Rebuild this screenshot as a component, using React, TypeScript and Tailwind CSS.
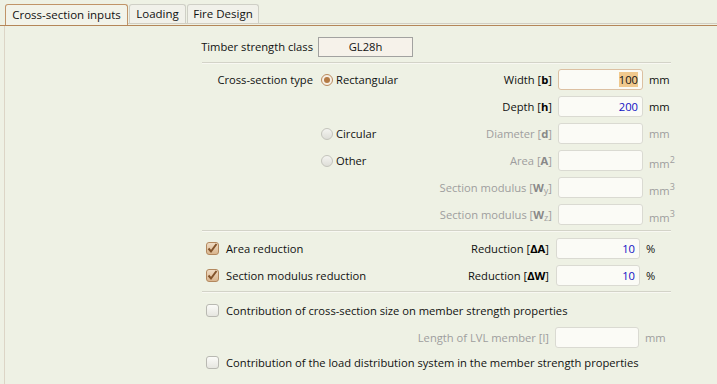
const Radio = ({ checked }: { checked?: boolean }) => (
  <span
    className={`inline-flex items-center justify-center w-[12px] h-[12px] rounded-full border ${
      checked ? "border-[#b88a5e] bg-[#f7efe4]" : "border-[#c4c4bc] bg-gradient-to-b from-[#f4f4f0] to-[#dedeD8]"
    }`}
  >
    {checked && <span className="w-[6px] h-[6px] rounded-full bg-[#b47a44]" />}
  </span>
);

const Check = ({ checked }: { checked?: boolean }) =>
  checked ? (
    <span className="inline-flex items-center justify-center w-[13px] h-[13px] rounded-[3px] border border-[#b3885e] bg-gradient-to-b from-[#efdcc4] to-[#d9b58e]">
      <svg width="11" height="11" viewBox="0 0 11 11">
        <path d="M1.5 5.5 L4 8.5 L9.5 1" fill="none" stroke="#82532a" strokeWidth="2" />
      </svg>
    </span>
  ) : (
    <span className="inline-block w-[13px] h-[13px] rounded-[3px] border border-[#b9b9b2] bg-gradient-to-b from-[#fbfbf8] to-[#e6e6e0]" />
  );

const Field = ({ value, kind, w = "w-[85px]" }: { value?: string; kind?: "focus" | "blue"; w?: string }) => (
  <div
    className={`${w} h-[21px] rounded-[3px] border bg-[#fbfbf6] flex items-center justify-end pr-[4px] ${
      kind === "focus" ? "border-[#dcc0a2]" : "border-[#dadad2]"
    }`}
  >
    {value && kind === "focus" && <span className="bg-[#f0c98e] text-[#111] leading-[15px]">{value}</span>}
    {value && kind === "blue" && <span className="text-[#1010c4]">{value}</span>}
  </div>
);

const Sep = () => <div className="ml-[197px] w-[469px] h-px bg-[#d3d3c8] border-b border-[#f8f8f2] box-content" />;

const Lbl = ({ pre, b, sub, post = "]", off }: { pre: string; b: string; sub?: string; post?: string; off?: boolean }) => (
  <span className={`whitespace-nowrap ${off ? "text-[#9e9e9e]" : "text-[#111]"}`}>
    {pre}
    <b className={off ? "text-[#888]" : "text-[#000]"}>{b}</b>
    {sub && <sub className="text-[9px]">{sub}</sub>}
    {post}
  </span>
);

const Unit = ({ t, sup, off }: { t: string; sup?: string; off?: boolean }) => (
  <span className={`ml-[6px] ${off ? "text-[#9e9e9e]" : "text-[#111]"} ${sup ? "mt-[6px]" : ""}`}>
    {t}
    {sup && <sup className="text-[9px]">{sup}</sup>}
  </span>
);

export default function App() {
  const rows = [
    { left: "Cross-section type", radio: <><Radio checked /><span className="ml-[3px]">Rectangular</span></>, label: <Lbl pre="Width [" b="b" />, field: <Field value="100" kind="focus" />, unit: <Unit t="mm" /> },
    { label: <Lbl pre="Depth [" b="h" />, field: <Field value="200" kind="blue" />, unit: <Unit t="mm" /> },
    { radio: <><Radio /><span className="ml-[3px]">Circular</span></>, label: <Lbl pre="Diameter [" b="d" off />, field: <Field />, unit: <Unit t="mm" off /> },
    { radio: <><Radio /><span className="ml-[3px]">Other</span></>, label: <Lbl pre="Area [" b="A" off />, field: <Field />, unit: <Unit t="mm" sup="2" off /> },
    { label: <Lbl pre="Section modulus [" b="W" sub="y" off />, field: <Field />, unit: <Unit t="mm" sup="3" off /> },
    { label: <Lbl pre="Section modulus [" b="W" sub="z" off />, field: <Field />, unit: <Unit t="mm" sup="3" off /> },
  ];

  return (
    <div className="w-[717px] h-[384px] overflow-hidden bg-[#eef1e4] font-['Open_Sans',sans-serif] text-[11.2px] text-[#111] leading-none whitespace-nowrap">
      {/* tab strip */}
      <div className="h-[26px] border-b border-[#b48658] flex items-end pl-[5px]">
        <div className="h-[21px] w-[123px] rounded-t-[3px] border border-b-0 border-[#c09468] bg-[#f2f3e9] flex items-center justify-center text-[11.5px]">
          Cross-section inputs
        </div>
        <div className="flex-1 flex items-end border-b border-[#d2cec2] mb-[1px] h-[20px]">
          <div className="ml-[1px] w-[57px] h-[19px] rounded-t-[3px] border border-b-0 border-[#cfcfc6] bg-[#f1f1ea] flex items-center justify-center text-[11.5px]">
            Loading
          </div>
          <div className="ml-[1px] w-[72px] h-[19px] rounded-t-[3px] border border-b-0 border-[#cfcfc6] bg-[#f1f1ea] flex items-center justify-center text-[11.5px]">
            Fire Design
          </div>
        </div>
      </div>

      {/* panel */}
      <div className="ml-[4px] h-[358px] border-l border-[#dcd5c6]">
        <div className="pl-[196px] pt-[11px] flex items-center">
          <span className="w-[112px] text-right">Timber strength class</span>
          <div className="ml-[5px] w-[95px] h-[20px] border border-[#a2a2a0] bg-[#f6f2ea] flex items-center justify-center">GL28h</div>
        </div>

        <div className="mt-[5px]"><Sep /></div>

        <div className="mt-[5px] pl-[196px] flex flex-col gap-[6px]">
          {rows.map((r, i) => (
            <div key={i} className="flex items-center h-[21px]">
              <span className="w-[120px] pr-[8px] text-right">{r.left}</span>
              <div className="w-[231px] flex items-center justify-between">
                <span className="flex items-center">{r.radio}</span>
                {r.label}
              </div>
              <div className="ml-[6px]">{r.field}</div>
              {r.unit}
            </div>
          ))}
        </div>

        <div className="mt-[5px]"><Sep /></div>

        <div className="mt-[6px] pl-[196px] flex flex-col gap-[6px]">
          {[
            { t: "Area reduction", b: "ΔA" },
            { t: "Section modulus reduction", b: "ΔW" },
          ].map((r) => (
            <div key={r.t} className="flex items-center h-[21px]">
              <div className="w-[348px] flex items-center justify-between pl-[5px]">
                <span className="flex items-center"><Check checked /><span className="ml-[7px]">{r.t}</span></span>
                <Lbl pre="Reduction [" b={r.b} />
              </div>
              <div className="ml-[7px]"><Field value="10" kind="blue" w="w-[84px]" /></div>
              <Unit t="%" />
            </div>
          ))}
        </div>

        <div className="mt-[5px]"><Sep /></div>

        <div className="pl-[201px]">
          <div className="mt-[7px] h-[21px] flex items-center">
            <Check />
            <span className="ml-[7px]">Contribution of cross-section size on member strength properties</span>
          </div>
          <div className="mt-[6px] h-[21px] flex items-center">
            <span className="w-[343px] text-right text-[#9e9e9e]">Length of LVL member [l]</span>
            <div className="ml-[6px]"><Field w="w-[84px]" /></div>
            <Unit t="mm" off />
          </div>
          <div className="mt-[4px] h-[21px] flex items-center">
            <Check />
            <span className="ml-[7px]">Contribution of the load distribution system in the member strength properties</span>
          </div>
        </div>
      </div>
    </div>
  );
}
